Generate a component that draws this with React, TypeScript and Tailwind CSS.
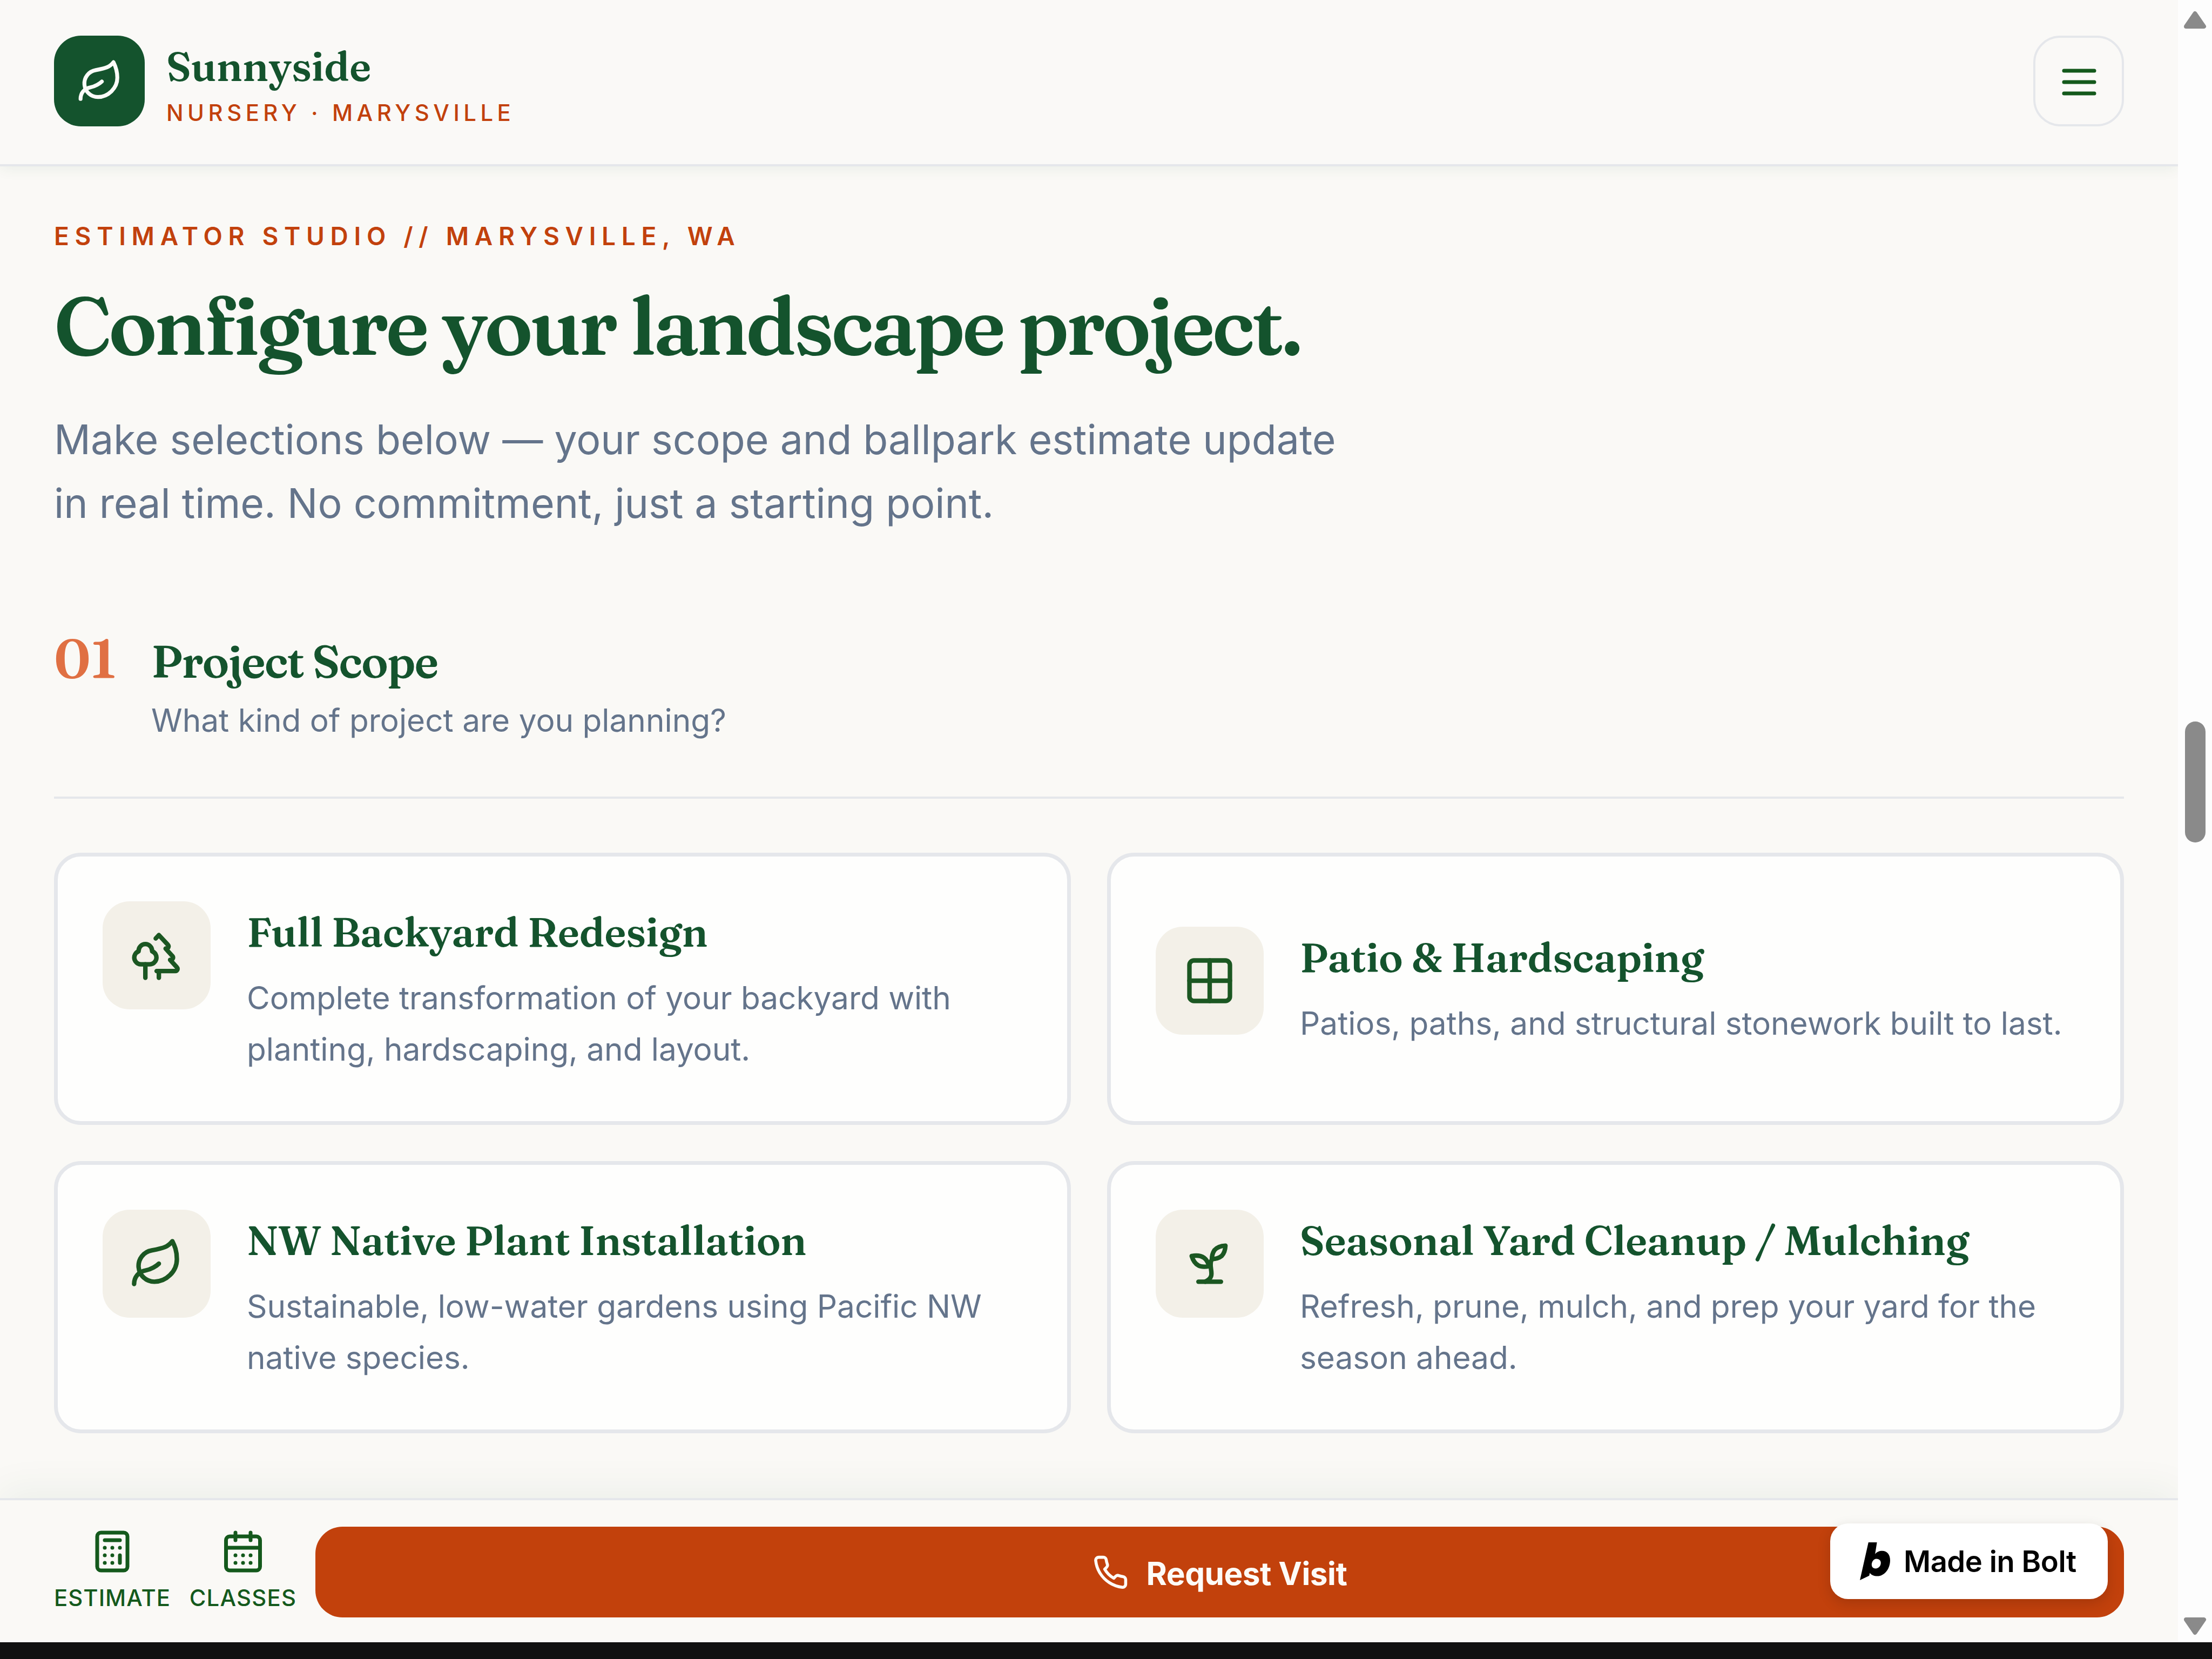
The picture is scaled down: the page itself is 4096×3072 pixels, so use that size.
import type { ReactNode } from 'react';
import { Calculator, CalendarDays, Grid2x2, Leaf, Trees } from 'lucide-react';

const serif = "font-['Fraunces','Liberation_Serif',serif] font-semibold";

const MenuIcon = ({ className }: { className?: string }) => (
    <svg viewBox="0 0 24 24" fill="none" stroke="currentColor" strokeWidth={2} strokeLinecap="round" className={className}>
        <path d="M4 6h16M4 12h16M4 18h16" />
    </svg>
);

const SproutIcon = ({ className }: { className?: string }) => (
    <svg viewBox="0 0 24 24" fill="none" stroke="currentColor" strokeWidth={2} strokeLinecap="round" strokeLinejoin="round" className={className}>
        <path d="M7 20h10" />
        <path d="M10 20c5.5-2.5.8-6.4 3-10" />
        <path d="M9.5 9.4c1.1.8 1.8 2.2 2.3 3.7-2 .4-3.5.4-4.8-.3-1.2-.6-2.3-1.9-3-4.2 2.8-.5 4.4 0 5.5.8z" />
        <path d="M14.1 6a7 7 0 0 0-1.1 4c1.9-.1 3.3-.6 4.3-1.4 1-1 1.6-2.3 1.7-4.6-2.7.1-4 1-4.9 2z" />
    </svg>
);

const PhoneIcon = ({ className }: { className?: string }) => (
    <svg viewBox="0 0 24 24" fill="none" stroke="currentColor" strokeWidth={2} strokeLinecap="round" strokeLinejoin="round" className={className}>
        <path d="M22 16.92v3a2 2 0 0 1-2.18 2 19.79 19.79 0 0 1-8.63-3.07 19.5 19.5 0 0 1-6-6 19.79 19.79 0 0 1-3.07-8.67A2 2 0 0 1 4.11 2h3a2 2 0 0 1 2 1.72 12.84 12.84 0 0 0 .7 2.81 2 2 0 0 1-.45 2.11L8.09 9.91a16 16 0 0 0 6 6l1.27-1.27a2 2 0 0 1 2.11-.45 12.84 12.84 0 0 0 2.81.7A2 2 0 0 1 22 16.92z" />
    </svg>
);

const BoltMark = ({ className }: { className?: string }) => (
    <svg viewBox="48 48 195 244" fill="currentColor" className={className}>
        <path fillRule="evenodd" d="M103 48H158L146 124C158 109 173 103 192 103C223 103 243 128 243 163C243 217 209 266 160 266C139 266 122 259 112 245L108 263L48 292ZM154 154C137 154 124 173 124 192C124 207 134 217 149 217C169 217 183 201 183 180C183 164 171 154 154 154Z" />
    </svg>
);

interface Scope {
    title: string;
    lines: string[];
    icon: ReactNode;
}

const scopes: Scope[] = [
    {
        title: 'Full Backyard Redesign',
        lines: ['Complete transformation of your backyard with', 'planting, hardscaping, and layout.'],
        icon: <Trees className="size-[100px]" strokeWidth={2} />,
    },
    {
        title: 'Patio & Hardscaping',
        lines: ['Patios, paths, and structural stonework built to last.'],
        icon: <Grid2x2 className="size-[100px]" strokeWidth={2} />,
    },
    {
        title: 'NW Native Plant Installation',
        lines: ['Sustainable, low-water gardens using Pacific NW', 'native species.'],
        icon: <Leaf className="size-[100px]" strokeWidth={2} />,
    },
    {
        title: 'Seasonal Yard Cleanup / Mulching',
        lines: ['Refresh, prune, mulch, and prep your yard for the', 'season ahead.'],
        icon: <SproutIcon className="size-[100px]" />,
    },
];

const ScopeCard = ({ scope }: { scope: Scope }) => (
    <button
        type="button"
        className="flex h-[504px] items-center rounded-[50px] border-[7px] border-[#e5e7eb] bg-[#fefefd] pt-[80px] pb-[84px] pl-[83px] text-left"
    >
        <div className="flex items-start gap-[67px]">
            <div className="flex size-[200px] shrink-0 items-center justify-center rounded-[50px] bg-[#f3f0e8] text-[#1b5722]">
                {scope.icon}
            </div>
            <div className="whitespace-nowrap">
                <h3 className={`${serif} text-[75.2px] leading-[113px] tracking-[-0.38px] text-[#14532d]`}>{scope.title}</h3>
                <p className="mt-[18px] text-[58.5px] leading-[95px] tracking-[-0.04px] text-[#64748b]">
                    {scope.lines.map((line) => (
                        <span key={line} className="block">{line}</span>
                    ))}
                </p>
            </div>
        </div>
    </button>
);

const Header = () => (
    <header className="z-10 flex h-[308px] shrink-0 items-center justify-between border-b-4 border-[#e5e7eb] bg-[#faf9f7] px-[100px] pb-[5px] shadow-[0_4px_25px_rgba(20,83,45,0.07)]">
        <div className="flex items-center gap-[40px]">
            <div className="flex size-[168px] items-center justify-center rounded-[50px] bg-[#14532d] pt-[3px] pl-[2px] text-[#fdfcf9]">
                <Leaf className="size-[86px]" strokeWidth={2} />
            </div>
            <div className="pt-[17px] whitespace-nowrap">
                <p className={`${serif} text-[75.2px] leading-[94px] tracking-[-0.3px] text-[#14532d]`}>Sunnyside</p>
                <p className="mt-[8px] text-[41.8px] leading-[63px] font-medium tracking-[7.5px] text-[#c2410c]">NURSERY · MARYSVILLE</p>
            </div>
        </div>
        <button type="button" className="flex size-[168px] items-center justify-center rounded-[50px] border-4 border-[#e5e7eb] pt-[4px] pl-[2px] text-[#14591c]">
            <MenuIcon className="size-[84px]" />
        </button>
    </header>
);

const BottomBar = () => (
    <footer className="relative z-10 flex h-[267px] shrink-0 items-start gap-[33.5px] border-t-4 border-[#e5e7eb] bg-[#faf9f6] px-[100px] pt-[49px] shadow-[0_-16px_67px_rgba(20,83,45,0.06)]">
        <a className="flex w-[216px] flex-col items-center gap-[13px] pt-[4px] text-[#14591c]">
            <Calculator className="size-[84px]" strokeWidth={2} />
            <span className="text-[41.8px] leading-[63px] font-medium tracking-[1.05px]">ESTIMATE</span>
        </a>
        <a className="flex w-[201px] flex-col items-center gap-[13px] pt-[4px] text-[#14591c]">
            <CalendarDays className="size-[84px]" strokeWidth={2} />
            <span className="text-[41.8px] leading-[63px] font-medium tracking-[1.25px]">CLASSES</span>
        </a>
        <button type="button" className="flex h-[168px] flex-1 items-center justify-center gap-[33px] rounded-[50px] bg-[#c2410c] text-[#fdfbf7]">
            <PhoneIcon className="size-[67px]" />
            <span className="pt-[5px] text-[58.5px] leading-[84px] font-bold tracking-[-0.5px]">Request Visit</span>
        </button>

        {/* badge floats over the end of the call-to-action */}
        <a className="absolute top-[43px] right-[130px] flex h-[140px] w-[514px] items-center gap-[25px] rounded-[33px] bg-white pl-[55px] text-black shadow-[0_8px_25px_rgba(0,0,0,0.15)]">
            <BoltMark className="h-[70px] w-[56px]" />
            <span className="text-[54.3px] leading-[80px] font-semibold tracking-[-0.45px] whitespace-nowrap">Made in Bolt</span>
        </a>
    </footer>
);

const Scrollbar = () => (
    <div className="flex w-[63px] flex-col items-center bg-[#fdfdfd] pt-[20px] pb-[13px] text-[#8a8a8a]">
        <svg viewBox="0 0 43 33" fill="currentColor" stroke="currentColor" strokeWidth={8} strokeLinejoin="round" className="h-[33px] w-[43px]">
            <path d="M21.5 5L38 29H5Z" />
        </svg>
        <div className="mt-[1283px] h-[224px] w-[38px] rounded-full bg-[#8a8a8a]" />
        <svg viewBox="0 0 43 33" fill="currentColor" stroke="currentColor" strokeWidth={8} strokeLinejoin="round" className="mt-auto h-[33px] w-[43px]">
            <path d="M21.5 28L38 4H5Z" />
        </svg>
    </div>
);

const App = () => {
    return (
        <div className="flex h-[3072px] w-[4096px] flex-col overflow-hidden bg-[#111111] font-['Inter',sans-serif]">
            <div className="flex h-[3041px]">
                <div className="flex w-[4033px] flex-col overflow-hidden bg-[#faf9f6]">
                    <Header />

                    <main className="flex-1 px-[100px] pt-[94px]">
                        <p className="text-[46px] leading-[70px] font-semibold tracking-[10.68px] text-[#c2410c]">
                            ESTIMATOR STUDIO // MARYSVILLE, WA
                        </p>
                        <h1 className={`${serif} mt-[45px] text-[150.5px] leading-[172px] tracking-[-5.2px] text-[#14532d]`}>
                            Configure your landscape project.
                        </h1>
                        <p className="mt-[66px] text-[75.2px] leading-[117.5px] tracking-[-0.03px] text-[#64748b]">
                            Make selections below — your scope and ballpark estimate update
                            <br />
                            in real time. No commitment, just a starting point.
                        </p>

                        <section className="mt-[176px]">
                            <div className="flex items-start border-b-4 border-[#e5e7eb] pb-[99px]">
                                <span className={`${serif} mt-[3px] w-[180px] text-[100.3px] leading-[100px] text-[#e07043]`}>01</span>
                                <div>
                                    <h2 className={`${serif} text-[83.6px] leading-[117px] tracking-[-2.1px] text-[#14532d]`}>Project Scope</h2>
                                    <p className="mt-[9px] text-[58.5px] leading-[84px] text-[#64748b]">What kind of project are you planning?</p>
                                </div>
                            </div>

                            <div className="mt-[100px] grid grid-cols-2 gap-[67px]">
                                {scopes.map((scope) => (
                                    <ScopeCard key={scope.title} scope={scope} />
                                ))}
                            </div>
                        </section>
                    </main>

                    <BottomBar />
                </div>
                <Scrollbar />
            </div>
        </div>
    );
};

export default App;
